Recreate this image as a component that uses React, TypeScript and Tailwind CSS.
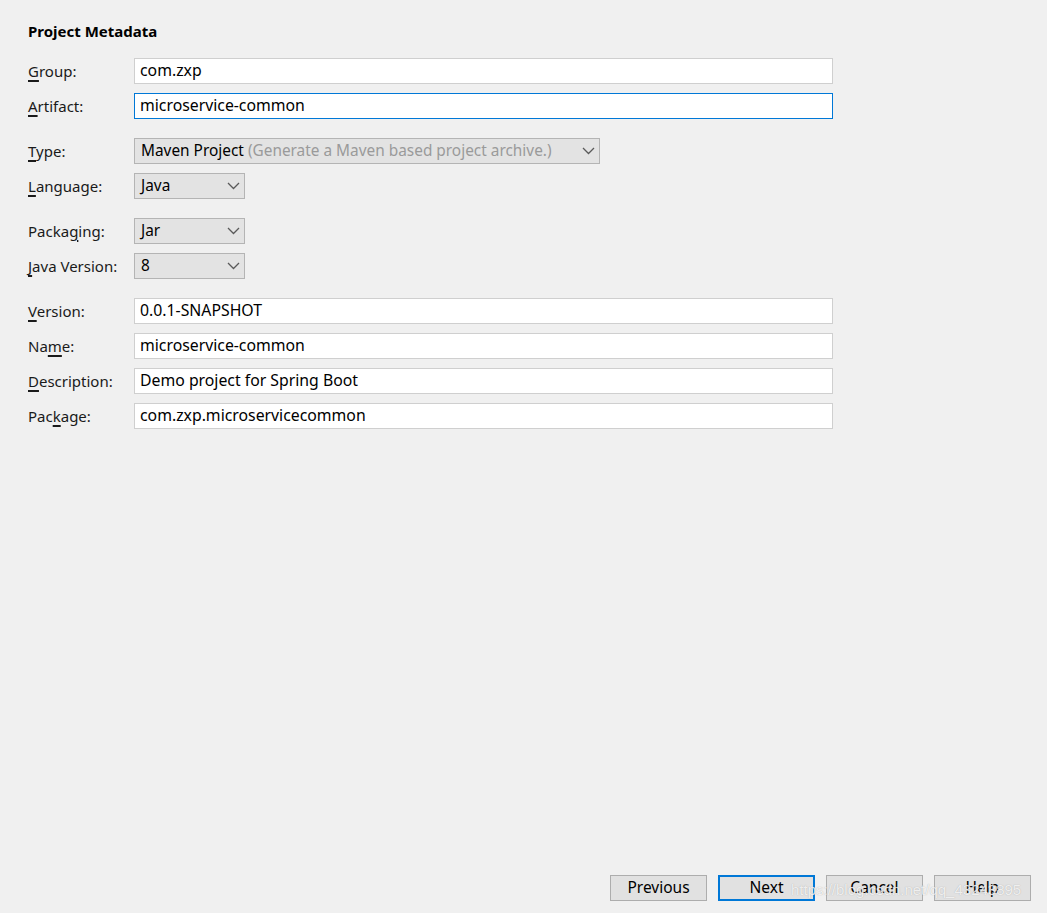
import type { ReactNode } from "react";

const FONT = { fontFamily: '"Noto Sans", "Noto Sans CJK SC", sans-serif' };

function Label({ pre, u, post, }: { pre?: string; u: string; post: string }) {
  return (
    <div className="w-[106px] shrink-0 text-[15px] text-[#1a1a1a]">
      {pre}
      <span className="underline decoration-2 underline-offset-[3px]">{u}</span>
      {post}
    </div>
  );
}

function Row({ label, children }: { label: ReactNode; children: ReactNode }) {
  return (
    <div className="flex h-[26px] items-center">
      {label}
      {children}
    </div>
  );
}

function TextField({ value, focused }: { value: string; focused?: boolean }) {
  return (
    <div
      className={
        "flex h-[26px] w-[699px] items-center bg-white px-[5px] text-[15.8px] text-black " +
        (focused ? "border border-[#0078d7]" : "border border-[#cfcfcf]")
      }
    >
      {value}
    </div>
  );
}

function Chevron() {
  return (
    <svg width="13" height="8" viewBox="0 0 13 8" fill="none" aria-hidden>
      <path d="M1 1l5.5 5.5L12 1" stroke="#5a5a5a" strokeWidth="1.3" />
    </svg>
  );
}

function Select({ width, children }: { width: string; children: ReactNode }) {
  return (
    <div
      className={
        "flex h-[26px] items-center justify-between border border-[#b4b4b4] bg-[#e3e3e3] pl-[6px] pr-[4px] text-[15.4px] text-black " +
        width
      }
    >
      <span className="whitespace-nowrap">{children}</span>
      <Chevron />
    </div>
  );
}

function Button({ text, primary }: { text: string; primary?: boolean }) {
  return (
    <div
      className={
        "flex h-[26px] w-[97px] items-center justify-center bg-[#e1e1e1] text-[15.5px] text-black " +
        (primary ? "border-2 border-[#0078d7]" : "border border-[#adadad]")
      }
    >
      {text}
    </div>
  );
}

export default function App() {
  return (
    <div className="relative flex h-[913px] w-[1047px] flex-col overflow-hidden bg-[#f0f0f0]" style={FONT}>
      <div className="pl-[28px] pt-[21px] text-[15px] font-bold leading-[20px] text-black">
        Project Metadata
      </div>

      <div className="mt-[17px] flex flex-col gap-[19px] pl-[28px]">
        <div className="flex flex-col gap-[9px]">
          <Row label={<Label u="G" post="roup:" />}>
            <TextField value="com.zxp" />
          </Row>
          <Row label={<Label u="A" post="rtifact:" />}>
            <TextField value="microservice-common" focused />
          </Row>
        </div>

        <div className="flex flex-col gap-[9px]">
          <Row label={<Label u="T" post="ype:" />}>
            <Select width="w-[466px]">
              Maven Project <span className="text-[#9a9a9a]">(Generate a Maven based project archive.)</span>
            </Select>
          </Row>
          <Row label={<Label u="L" post="anguage:" />}>
            <Select width="w-[111px]">Java</Select>
          </Row>
        </div>

        <div className="flex flex-col gap-[9px]">
          <Row label={<Label pre="Packa" u="g" post="ing:" />}>
            <Select width="w-[111px]">Jar</Select>
          </Row>
          <Row label={<Label u="J" post="ava Version:" />}>
            <Select width="w-[111px]">8</Select>
          </Row>
        </div>

        <div className="flex flex-col gap-[9px]">
          <Row label={<Label u="V" post="ersion:" />}>
            <TextField value="0.0.1-SNAPSHOT" />
          </Row>
          <Row label={<Label pre="Na" u="m" post="e:" />}>
            <TextField value="microservice-common" />
          </Row>
          <Row label={<Label u="D" post="escription:" />}>
            <TextField value="Demo project for Spring Boot" />
          </Row>
          <Row label={<Label pre="Pac" u="k" post="age:" />}>
            <TextField value="com.zxp.microservicecommon" />
          </Row>
        </div>
      </div>

      <div className="mt-auto flex justify-end gap-[11px] pb-[12px] pr-[16px]">
        <Button text="Previous" />
        <Button text="Next" primary />
        <Button text="Cancel" />
        <Button text="Help" />
      </div>

      {/* blog watermark over the buttons */}
      <div
        className="absolute left-[791px] top-[879px] text-[15px] text-white/80 [text-shadow:0_0_1px_rgba(120,120,120,0.6)]"
        style={{ fontFamily: '"Liberation Sans", sans-serif' }}
      >
        https://blog.csdn.net/qq_43243895
      </div>
    </div>
  );
}
